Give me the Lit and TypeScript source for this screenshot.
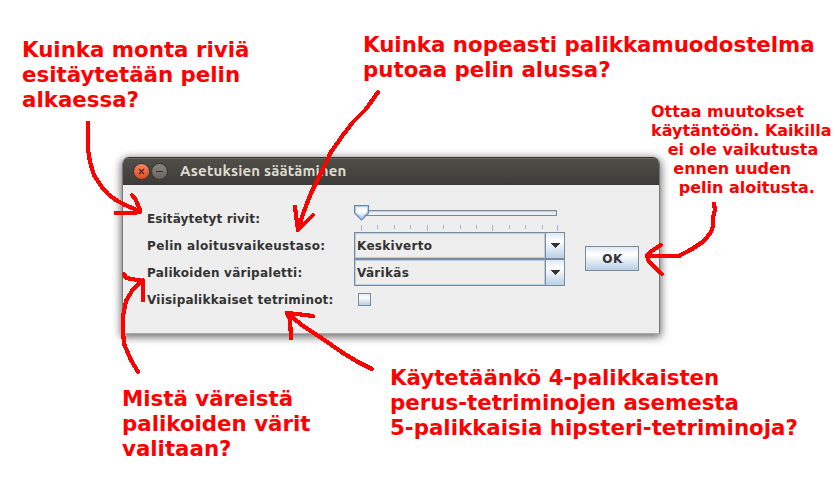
import { LitElement, html, svg, css } from "lit";
import { customElement, property } from "lit/decorators.js";

@customElement("settings-slider")
class SettingsSlider extends LitElement {
  static styles = css`
    :host { display: block; height: 29px; width: 211px; }
    svg { display: block; }
  `;
  render() {
    const major = [7, 73, 138, 203];
    const minor = [23, 40, 56, 89, 106, 122, 155, 171, 188];
    return html`<svg width="211" height="29" shape-rendering="crispEdges">
      <defs>
        <linearGradient id="thumb" x1="0" y1="0" x2="0" y2="1">
          <stop offset="0" stop-color="#dce8f4" /><stop offset=".3" stop-color="#fff" />
          <stop offset=".45" stop-color="#fff" /><stop offset="1" stop-color="#aac8e6" />
        </linearGradient>
      </defs>
      <rect x="4.5" y="7.5" width="198" height="5" fill="#eee" stroke="#7a8a99" />
      <path d="M5 8.5H202" stroke="#b8cfe5" />
      ${major.map((x) => svg`<rect x=${x} y="22" width="1" height="6" fill="#a3b8cc"/>`)}
      ${minor.map((x) => svg`<rect x=${x} y="22" width="1" height="4" fill="#a3b8cc"/>`)}
      <path d="M1.5 9V3.5H13.5V9L7.5 15.5Z" fill="url(#thumb)" stroke="#b8cfe5" shape-rendering="auto" />
      <path d="M.5 2.5H14.5V10L7.5 17L.5 10Z" fill="none" stroke="#5f80c4" stroke-width="1.1" shape-rendering="auto" />
    </svg>`;
  }
}

@customElement("settings-combo")
class SettingsCombo extends LitElement {
  @property() value = "";
  static styles = css`
    :host { display: flex; box-sizing: border-box; width: 211px; height: 27px; border: 1px solid #7a8a99; }
    .value { flex: 1; box-sizing: border-box; border: 1px solid #b8cfe5; padding: 1px 0 0 1px; line-height: 23px; }
    .button { width: 18px; border-left: 1px solid #7a8a99; display: flex; align-items: center; justify-content: center;
      background: linear-gradient(#dde8f3 0, #fff 30%, #fff 35%, #eef3f8 50%, #b8cfe5 100%); }
    svg { display: block; }
  `;
  render() {
    return html`<div class="value">${this.value}</div>
      <div class="button"><svg width="10" height="5" shape-rendering="crispEdges"><path d="M0 0H10L5 5Z" fill="#333" /></svg></div>`;
  }
}

@customElement("app-root")
class AppRoot extends LitElement {
  static styles = css`
    :host { display: block; position: relative; width: 835px; height: 481px; overflow: hidden; background: #fff;
      font: bold 12px "DejaVu Sans", sans-serif; color: #333; }
    .window { position: absolute; left: 122px; top: 157px; width: 538px; height: 177px; box-sizing: border-box;
      border-radius: 7px 7px 0 0; background: #eee; box-shadow: 0 2px 8px 1px rgba(0,0,0,.6); overflow: hidden;
      border: 1px solid #aaa; border-top: 0; border-left-color: #777; border-right-color: #777; }
    .titlebar { height: 28px; margin: 0 -1px; box-sizing: border-box; padding-left: 11px; display: flex; align-items: center;
      background: linear-gradient(#504f48, #3c3b37); border-top: 1px solid #353430; box-shadow: inset 0 1px #68675f; color: #dfdbd2; }
    .title { font: bold 15px Ubuntu, "Noto Sans", sans-serif; line-height: 20px; margin: -2px 0 0 11px; white-space: nowrap; letter-spacing: .15px; }
    .controls { display: block; margin-top: -1px; }
    .content { display: flex; padding: 18px 0 0 24px; }
    .labels { width: 207px; padding-top: 3px; }
    .label { height: 27px; line-height: 27px; white-space: nowrap; letter-spacing: .22px; }
    .label:first-child { line-height: 26px; letter-spacing: .14px; }
    .label:nth-child(2) { letter-spacing: .36px; }
    .label:nth-child(3) { letter-spacing: .26px; }
    .fields { width: 211px; }
    settings-combo { letter-spacing: .3px; }
    .check { margin: 7px 0 0 4px; width: 13px; height: 13px; box-sizing: border-box; border: 1px solid #7a8a99;
      background: linear-gradient(#dde8f3, #fff 30%, #b8cfe5); }
    .ok { margin: 43px 0 0 20px; width: 54px; height: 25px; box-sizing: border-box; border: 1px solid #7a8a99;
      display: flex; align-items: center; justify-content: center; letter-spacing: .4px; padding-left: 1px;
      background: linear-gradient(#dde8f3 0, #fff 30%, #fff 35%, #eef3f8 50%, #b8cfe5 100%); }
    .note { position: absolute; color: #f00; font-size: 21.33px; line-height: 25px; white-space: pre; }
    .rows { left: 22px; top: 37px; }
    .speed { left: 363px; top: 32px; }
    .palette { left: 122px; top: 386px; }
    .five { left: 390px; top: 365px; }
    .apply { left: 651px; top: 102px; font-size: 16px; line-height: 19px; }
    .in1 { padding-left: 16.7px; } .in2 { padding-left: 22.3px; } .in3 { padding-left: 27.8px; }
    .arrows { position: absolute; left: 0; top: 0; }
  `;
  render() {
    return html`
      <div class="window">
        <div class="titlebar">
          <svg class="controls" width="36" height="20">
            <defs>
              <linearGradient id="c" x1="0" y1="0" x2="0" y2="1"><stop stop-color="#f58662" /><stop offset="1" stop-color="#de4a1e" /></linearGradient>
              <linearGradient id="m" x1="0" y1="0" x2="0" y2="1"><stop stop-color="#888780" /><stop offset="1" stop-color="#64635d" /></linearGradient>
            </defs>
            <circle cx="8.5" cy="10.5" r="8" fill="url(#c)" stroke="#34332f" />
            <path d="M6 8L11 13M11 8L6 13" stroke="#3c2b24" stroke-width="1.2" />
            <circle cx="26.5" cy="10.5" r="8" fill="url(#m)" stroke="#34332f" />
            <path d="M23 10.5H30" stroke="#35342f" />
          </svg>
          <div class="title">Asetuksien säätäminen</div>
        </div>
        <div class="content">
          <div class="labels">
            <div class="label">Esitäytetyt rivit:</div>
            <div class="label">Pelin aloitusvaikeustaso:</div>
            <div class="label">Palikoiden väripaletti:</div>
            <div class="label">Viisipalikkaiset tetriminot:</div>
          </div>
          <div class="fields">
            <settings-slider></settings-slider>
            <settings-combo value="Keskiverto"></settings-combo>
            <settings-combo value="Värikäs"></settings-combo>
            <div class="check"></div>
          </div>
          <div class="ok">OK</div>
        </div>
      </div>
      <div class="note rows"><div>Kuinka monta riviä</div><div>esitäytetään pelin</div><div>alkaessa?</div></div>
      <div class="note speed"><div>Kuinka nopeasti palikkamuodostelma</div><div>putoaa pelin alussa?</div></div>
      <div class="note palette"><div>Mistä väreistä</div><div>palikoiden värit</div><div>valitaan?</div></div>
      <div class="note five"><div>Käytetäänkö 4-palikkaisten</div><div>perus-tetriminojen asemesta</div><div>5-palikkaisia hipsteri-tetriminoja?</div></div>
      <div class="note apply"><div>Ottaa muutokset</div><div>käytäntöön. Kaikilla</div><div class="in1">ei ole vaikutusta</div><div class="in2">ennen uuden</div><div class="in3">pelin aloitusta.</div></div>
      <svg class="arrows" width="835" height="481" fill="none" stroke="#f00" stroke-width="4.2" stroke-linecap="round" stroke-linejoin="round" shape-rendering="crispEdges">
        <path d="M88 123V149L90 162L94 175L101 186L108 194L116 200L125 205L140.5 211.5M132 195L136 200L140.5 211.5M115.5 213H134L140.5 211.5" />
        <path d="M378 92L371 102L366 109L353 122L343 135L331 152L322 171L311 193L303 214L298 230M295 207L298 230L313 215" />
        <path d="M714 204L715 210L713 217V226L711 232L704 241L692 249L679 256H649M660.5 245L649 253L647 256L649 262L662 274" />
        <path d="M138 372L131 360L124 344L123 330V316L126 301L133 289L143 280M124 274L126 278L143 281V300" />
        <path d="M372 369L358 362L343 353L320 337L303 326L287 313M313 316L297 314L287 313L290 319L291 338" />
      </svg>`;
  }
}
